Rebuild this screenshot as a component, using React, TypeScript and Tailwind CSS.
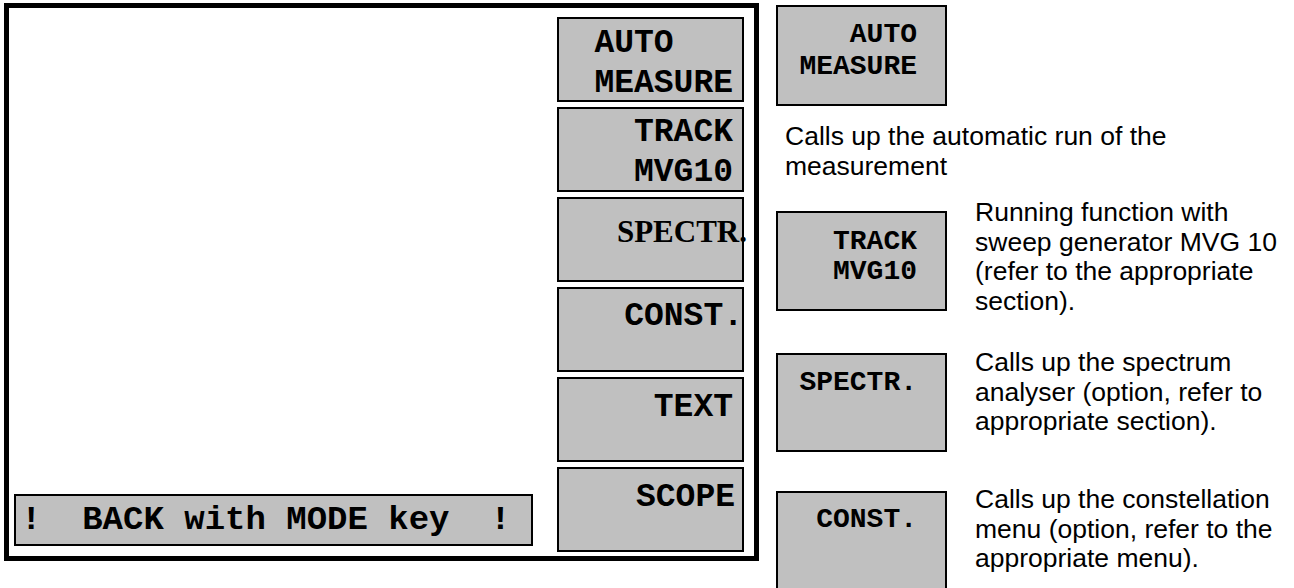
import React from "react";

const mono = "font-['Liberation_Mono','Courier_New',monospace] font-bold text-black";

function LeftBtn({ children, cls }: { children: React.ReactNode; cls: string }) {
  return (
    <div className={`h-[85px] border-2 border-black bg-[#c0c0c0] flex justify-end ${cls}`}>{children}</div>
  );
}

function RightBox({ lines, cls, h, lead = "leading-[30px]" }: { lines: string[]; cls: string; h: string; lead?: string }) {
  return (
    <div className={`w-[171px] shrink-0 border-2 border-black bg-[#c0c0c0] flex flex-col items-end pr-[28px] ${h} ${cls}`}>
      {lines.map((l) => (
        <div key={l} className={`${mono} text-[28px] ${lead}`}>{l}</div>
      ))}
    </div>
  );
}

const desc = "font-['Liberation_Sans',Arial,sans-serif] text-[26.5px] leading-[29.5px] text-black";

export default function App() {
  return (
    <div className="w-[1294px] h-[588px] bg-white overflow-hidden flex">
      <div className="pl-[4px] pt-[3px]">
        <div className="w-[755px] h-[558px] border-[5px] border-black flex bg-white">
          <div className="flex-1 flex flex-col justify-end pl-[5px] pb-[10px]">
            <div className={`w-[519px] h-[52px] border-2 border-black bg-[#c0c0c0] flex items-center pl-[5px] ${mono} text-[34px] leading-[40px] whitespace-pre`}>
              {"!  BACK with MODE key  !"}
            </div>
          </div>
          <div className="w-[187px] mr-[10px] pt-[9px] flex flex-col gap-[5px]">
            <LeftBtn cls="pt-[5px] pr-[9px]">
              <div className={`${mono} text-[33px] leading-[40px] text-left`}>
                <div>AUTO</div>
                <div>MEASURE</div>
              </div>
            </LeftBtn>
            <LeftBtn cls="pt-[4px] pr-[9px]">
              <div className={`${mono} text-[33px] leading-[40px] text-right`}>
                <div>TRACK</div>
                <div>MVG10</div>
              </div>
            </LeftBtn>
            <LeftBtn cls="pt-[13px] pr-0">
              <div className="font-['Liberation_Serif','Times_New_Roman',serif] font-bold text-[31px] leading-[40px] text-black -mr-[5px]">
                SPECTR.
              </div>
            </LeftBtn>
            <LeftBtn cls="pt-[8px] pr-0">
              <div className={`${mono} text-[33px] leading-[40px] -mr-[1px]`}>CONST.</div>
            </LeftBtn>
            <LeftBtn cls="pt-[9px] pr-[9px]">
              <div className={`${mono} text-[33px] leading-[40px]`}>TEXT</div>
            </LeftBtn>
            <LeftBtn cls="pt-[9px] pr-[7px]">
              <div className={`${mono} text-[33px] leading-[40px]`}>SCOPE</div>
            </LeftBtn>
          </div>
        </div>
      </div>

      <div className="ml-[17px] pt-[5px] flex flex-col">
        <RightBox lines={["AUTO", "MEASURE"]} cls="pt-[12px]" h="h-[101px]" lead="leading-[32px]" />
        <div className={`${desc} mt-[16px] ml-[9px]`}>
          <div>Calls up the automatic run of the</div>
          <div>measurement</div>
        </div>
        <div className="flex mt-[17px]">
          <RightBox lines={["TRACK", "MVG10"]} cls="pt-[14px] mt-[13px]" h="h-[100px]" />
          <div className={`${desc} ml-[28px]`}>
            <div>Running function with</div>
            <div>sweep generator MVG 10</div>
            <div>(refer to the appropriate</div>
            <div>section).</div>
          </div>
        </div>
        <div className="flex mt-[32px]">
          <RightBox lines={["SPECTR."]} cls="pt-[13px] mt-[5px]" h="h-[99px]" />
          <div className={`${desc} ml-[28px]`}>
            <div>Calls up the spectrum</div>
            <div>analyser (option, refer to</div>
            <div>appropriate section).</div>
          </div>
        </div>
        <div className="flex mt-[33px]">
          <RightBox lines={["CONST."]} cls="pt-[12px] mt-[6px]" h="h-[110px]" />
          <div className={`${desc} ml-[28px]`}>
            <div>Calls up the constellation</div>
            <div>menu (option, refer to the</div>
            <div>appropriate menu).</div>
          </div>
        </div>
      </div>
    </div>
  );
}
